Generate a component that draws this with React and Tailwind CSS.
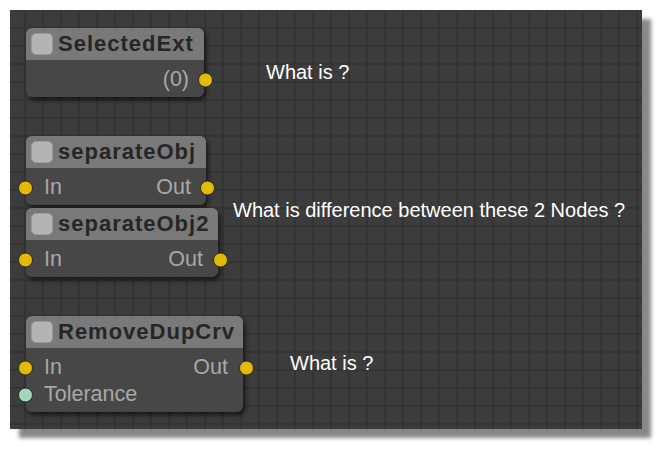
import React from "react";

function Dot({ side, color = "yellow", offset = "right-[-9px]" }) {
  const c = color === "yellow" ? "bg-[#e2ba00]" : "bg-[#9fd8bc]";
  const pos = side === "left" ? "left-[-8px]" : offset;
  return (
    <span
      className={`absolute top-1/2 -translate-y-1/2 ${pos} w-[15px] h-[15px] rounded-full ${c} border border-[#2c2c2c]`}
    />
  );
}

function Node({ title, width, rows, pos, rightOffset }) {
  return (
    <div
      className={`absolute ${pos} ${width} rounded-[6px] bg-[#474747] shadow-[2px_3px_5px_rgba(0,0,0,0.65)]`}
    >
      <div className="flex h-[32px] items-center gap-[5px] rounded-t-[6px] bg-[#797979] pl-[5px]">
        <span className="h-[22px] w-[22px] shrink-0 rounded-[5px] bg-[#b4b4b4] border border-[#9a9a9a]" />
        <span className="text-[22px] font-bold tracking-[1px] text-[#262626] leading-none whitespace-nowrap">
          {title}
        </span>
      </div>
      <div className="pt-[6px] pb-[4px]">
        {rows.map((r, i) => (
          <div
            key={i}
            className="relative flex h-[27px] items-center justify-between pl-[18px] pr-[15px] text-[21.5px] leading-none text-[#a8a8a8]"
          >
            {r.left ? <Dot side="left" color={r.leftColor || "yellow"} /> : null}
            <span>{r.leftText || ""}</span>
            <span>{r.rightText || ""}</span>
            {r.right ? <Dot side="right" offset={rightOffset} /> : null}
          </div>
        ))}
      </div>
    </div>
  );
}

export default function App() {
  return (
    <div className="h-[454px] w-[667px] bg-white pl-[10px] pt-[10px] font-['Liberation_Sans',Arial,sans-serif]">
      <div className="relative h-[419px] w-[632px] bg-[#3c3c3c] bg-[linear-gradient(to_right,#343434_2px,transparent_2px),linear-gradient(to_bottom,#343434_2px,transparent_2px)] bg-size-[18px_18px] bg-position-[14px_17px] shadow-[9px_9px_4px_rgba(0,0,0,0.47)]">
        <Node
          title="SelectedExt"
          width="w-[178px]"
          pos="left-[16px] top-[18px]"
          rightOffset="right-[-9px]"
          rows={[{ rightText: "(0)", right: true }]}
        />
        <Node
          title="separateObj"
          width="w-[180px]"
          pos="left-[16px] top-[126px]"
          rightOffset="right-[-9px]"
          rows={[{ left: true, leftText: "In", rightText: "Out", right: true }]}
        />
        <Node
          title="separateObj2"
          width="w-[192px]"
          pos="left-[16px] top-[198px]"
          rightOffset="right-[-10px]"
          rows={[{ left: true, leftText: "In", rightText: "Out", right: true }]}
        />
        <Node
          title="RemoveDupCrv"
          width="w-[217px]"
          pos="left-[16px] top-[306px]"
          rightOffset="right-[-11px]"
          rows={[
            { left: true, leftText: "In", rightText: "Out", right: true },
            { left: true, leftColor: "green", leftText: "Tolerance" },
          ]}
        />
        <div className="absolute left-[256px] top-[50px] text-[20px] leading-[24px] text-white whitespace-nowrap">
          What is ?
        </div>
        <div className="absolute left-[223px] top-[188px] text-[20px] leading-[24px] text-white whitespace-nowrap">
          What is difference between these 2 Nodes ?
        </div>
        <div className="absolute left-[280px] top-[341px] text-[20px] leading-[24px] text-white whitespace-nowrap">
          What is ?
        </div>
      </div>
    </div>
  );
}
